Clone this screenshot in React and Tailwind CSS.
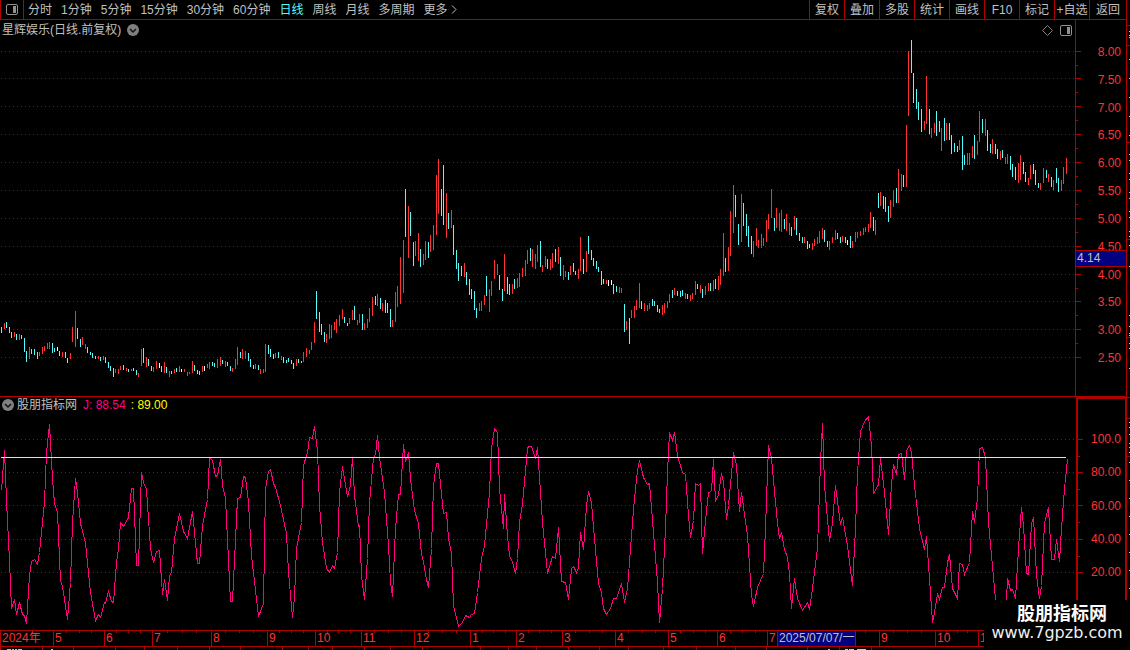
import { useState } from 'react';

const PERIODS = ['分时', '1分钟', '5分钟', '15分钟', '30分钟', '60分钟', '日线', '周线', '月线', '多周期'];
const TOOLS = ['复权', '叠加', '多股', '统计', '画线', 'F10', '标记', '+自选'];

const PRICES = ['8.00', '7.50', '7.00', '6.50', '6.00', '5.50', '5.00', '4.50', '4.00', '3.50', '3.00', '2.50'];
const PRICE_ROWS = [51, 78, 106, 134, 162, 190, 218, 246, 274, 301, 329, 357];
const PRICE_MINOR = [65, 92, 120, 148, 176, 204, 232, 288, 315, 343];

const LEVELS = ['100.0', '80.00', '60.00', '40.00', '20.00'];
const LEVEL_ROWS = [439, 472, 505, 539, 572];
const LEVEL_MINOR = [456, 489, 522, 556];

// label and cell width on the time axis; the cursor date covers one cell, so that one has no label
const MONTHS = [
  ['2024年', 53], ['5', 51], ['6', 48], ['7', 59], ['8', 56], ['9', 48], ['10', 46], ['11', 53], ['12', 56],
  ['1', 46], ['2', 46], ['3', 53], ['4', 53], ['5', 49], ['6', 50], ['7', 54], ['', 58], ['9', 56], ['10', 43], ['11', 50],
];

// r = up, c = down, w = unchanged: x, high, low
const CANDLES = `
c1,327,333 r4,323,329 c6,322,328 c9,327,333 c11,332,338 r14,332,337 c16,334,340 r19,334,340 c21,335,339
c24,338,352 c26,351,362 r29,347,359 c31,349,354 c34,349,355 c37,352,359 r39,352,356 r42,347,354 r44,346,351
r47,343,349 r49,342,349 c52,343,353 c54,348,352 w57,347,351 c59,351,356 r62,352,357 c65,352,358 c67,358,363
r70,353,359 r72,327,342 r75,311,347 c77,328,339 c80,339,347 r82,337,345 r85,344,349 c87,347,353 c90,352,355
c92,353,358 c95,356,359 r98,356,359 c100,357,361 r103,356,360 c105,357,363 c108,362,368 c110,366,371
c113,368,377 r115,369,373 r118,369,374 r120,366,370 c123,365,370 r126,368,371 c128,369,372 r131,369,371
c133,368,371 c136,370,375 r138,373,377 r141,349,366 c143,348,363 r146,357,367 c148,359,366 c151,366,371
r153,367,372 r156,361,369 w159,363,368 c161,366,372 r164,362,373 c166,367,373 r169,371,377 c171,371,374
r174,369,373 c176,368,372 r179,366,372 w181,369,372 r184,369,372 r187,372,376 r189,372,374 r192,361,373
c194,365,371 c197,370,374 c199,371,375 r202,366,372 w204,366,371 r207,364,368 r209,362,369 c212,362,366
c214,363,367 r217,359,368 r220,357,366 c222,360,364 r225,361,367 c227,362,366 c230,366,371 r232,368,372
r235,359,369 r237,347,365 c240,352,358 r242,349,359 r245,351,359 c248,353,361 c250,359,367 c253,365,369
r255,364,369 c258,365,370 r260,369,374 r263,369,373 r265,344,372 c268,345,354 c270,349,357 c273,354,359
r275,353,358 c278,352,358 r281,356,360 c283,357,363 c286,360,363 c288,358,362 c291,360,364 c293,363,369
r296,359,366 c298,359,363 c301,361,363 r303,352,362 r306,348,357 r309,350,354 r311,342,350 r314,322,343
c316,291,319 c319,312,332 c321,324,335 c324,332,342 r326,334,343 r329,324,339 r331,325,338 r334,322,330
r336,319,333 r339,315,326 r342,309,319 c344,317,323 c347,323,326 r349,318,324 r352,310,320 c354,306,320
r357,320,325 r359,314,323 c362,314,330 r364,323,330 r367,319,328 r369,308,322 r372,297,316 c375,296,305
r377,294,306 c380,298,309 r382,303,311 c385,300,313 c387,303,313 c390,309,327 r392,320,327 r395,292,322
r397,286,307 r400,257,304 r403,240,293 c405,189,237 r408,206,258 c410,212,236 c413,242,266 r415,241,256
r418,233,261 c420,249,267 r423,254,265 r425,241,260 c428,242,258 r430,235,252 r433,225,250 r436,175,235
r438,159,214 c441,189,216 c443,165,225 r446,193,238 c448,213,229 r451,210,228 c453,225,255 c456,250,269
c458,263,281 c461,266,276 r464,263,277 c466,272,285 c469,279,295 c471,289,299 c474,291,310 c476,308,318
r479,303,311 r481,301,311 r484,295,305 c486,276,296 r489,289,312 r491,281,296 r494,260,279 r497,264,275
c499,275,290 c502,289,301 r504,254,291 c507,277,294 c509,284,295 r512,284,294 c514,279,289 r517,278,288
r519,273,287 r522,268,277 r525,260,276 r527,250,264 c530,248,261 r532,249,267 r535,254,269 r537,245,262
c540,241,267 r542,265,272 r545,256,267 c547,259,269 r550,259,270 r552,253,268 c555,249,262 r558,247,264
c560,257,276 r563,265,280 r565,271,277 c568,272,280 r570,266,275 c573,263,272 c575,271,275 r578,269,279
r580,237,271 c583,259,274 r586,251,272 c588,236,254 c591,250,260 c593,258,266 c596,261,269 c598,267,272
c601,271,285 c603,279,284 r606,280,284 w608,280,286 w611,280,285 c613,284,294 c616,286,292 r619,287,293
r621,288,293 c624,304,332 r626,321,330 c629,318,344 r631,310,318 r634,306,318 r636,300,310 r639,283,308
c641,301,309 r644,303,311 r647,305,311 r649,303,309 c652,299,306 c654,301,306 c657,305,312 c659,309,313
r662,305,315 r664,303,313 r667,301,308 r669,294,303 c672,290,298 r674,288,295 c677,291,296 c680,291,297
c682,290,296 r685,293,299 c687,294,299 r690,295,301 r692,293,299 r695,281,295 c697,284,289 r700,285,293
c702,289,298 r705,286,295 r708,283,291 c710,283,291 r713,280,291 c715,279,289 r718,276,290 r720,269,285
r723,233,276 c725,258,272 r728,247,271 r730,211,256 r733,185,233 c735,195,217 c738,224,245 r741,194,242
c743,203,226 c746,214,236 c748,226,247 c751,236,254 r753,241,257 r756,228,246 r758,240,248 r761,234,248
r763,238,246 r766,220,242 r768,214,229 r771,189,218 c774,218,231 r776,208,228 r779,213,231 r781,210,232
c784,219,229 r786,214,231 r789,223,235 c791,227,236 r794,216,230 c796,218,235 c799,233,241 c802,237,243
r804,237,243 c807,241,249 c809,244,248 r812,243,250 r814,239,246 r817,237,244 r819,231,243 r822,228,239
c824,230,242 c827,241,247 r829,241,250 r832,237,243 r835,230,240 c837,233,239 c840,237,243 r842,236,242
c845,237,243 w847,240,245 c850,236,248 r852,241,248 r855,232,242 r857,232,238 r860,231,236 r863,228,235
r865,227,232 r868,224,232 r870,212,228 c873,217,231 r875,220,235 c878,193,208 r880,192,206 c883,196,209
c885,197,212 c888,206,222 r890,200,218 r893,190,207 c896,188,203 r898,169,203 r901,174,191 c903,175,187
r906,125,187 r908,51,116 c911,40,73 c913,73,103 c916,89,109 c918,102,120 c921,109,132 r924,121,130
r926,76,124 c929,109,134 r931,128,138 r934,123,133 c936,111,136 c939,121,132 r941,128,151 c944,118,141
r946,123,140 c949,123,140 c951,135,154 c954,143,152 c957,146,152 r959,140,150 c962,136,170 c964,155,165
r967,153,165 r969,153,165 r972,146,158 c974,135,159 r977,141,155 r979,111,142 c982,119,133 r985,119,136
c987,130,151 c990,144,153 r992,139,154 c995,144,154 c997,149,159 r1000,151,160 c1002,150,158 r1005,157,164
r1007,154,164 c1010,156,170 c1012,164,177 c1015,167,180 r1018,163,183 r1020,155,180 c1023,162,174
c1025,172,182 r1028,178,185 r1030,165,179 c1033,164,174 c1035,170,185 c1038,183,188 r1040,183,190
r1043,168,183 c1046,170,178 r1048,174,182 c1051,177,187 r1053,180,190 c1056,168,183 c1058,178,192
r1061,180,191 r1063,167,184 r1066,158,174`
  .trim()
  .split(/\s+/)
  .map((item) => {
    const [x, high, low] = item.slice(1).split(',').map(Number);
    return { kind: item[0], x, high, low };
  });

const CANDLE_FILL = { r: 'fill-[#ff3232]', c: 'fill-[#54fcfc]', w: 'fill-white' };

const J_LINE = `
1,490 4,450 6,500 9,560 11,608 14,599 16,614 19,602 22,614 24,615 26,623 29,575 31,561 34,559 37,564 39,552 44,502
46,452 49,424 52,478 54,503 57,512 60,580 62,586 67,619 70,582 72,522 75,478 77,492 80,523 85,542 90,592 95,620
98,614 100,617 104,602 105,603 108,591 111,601 113,602 116,562 118,548 120,522 123,526 128,517 131,488 133,488
136,565 138,565 141,472 143,482 146,489 150,548 153,562 156,551 159,550 162,594 164,579 167,600 169,575 171,572
174,538 179,513 183,531 187,538 192,511 197,563 199,563 202,525 207,499 209,457 212,460 215,476 217,475 220,459
222,485 225,498 230,601 232,601 237,498 240,497 243,476 245,477 248,502 251,555 258,616 263,603 265,488 268,471
270,469 273,483 275,487 280,505 286,533 288,572 292,617 294,597 296,548 301,522 303,465 307,452 309,437 312,438
314,426 317,450 319,505 322,542 326,568 329,572 332,565 334,568 337,552 339,492 342,466 347,496 350,485 352,457
354,495 358,526 359,525 361,575 364,599 367,558 369,502 373,457 375,454 377,435 379,457 384,492 388,545 390,582
392,596 395,528 398,494 400,494 403,444 405,461 408,452 410,478 414,510 418,523 421,553 423,562 426,579 428,587
431,548 433,485 436,463 438,463 443,513 446,512 448,538 451,553 453,605 458,626 462,622 465,615 469,617 471,614
474,613 477,592 481,558 484,545 489,492 491,448 494,428 497,432 499,488 503,528 504,494 507,535 509,555 512,562
515,573 517,558 519,522 522,503 527,448 528,446 531,446 535,458 537,447 542,522 547,573 552,556 555,558 558,527
561,581 565,582 568,599 571,568 573,566 576,572 578,567 580,532 583,549 586,505 588,491 591,502 594,538 598,583
601,592 603,608 606,614 610,608 613,598 616,598 621,583 624,602 627,588 632,522 634,498 637,470 639,460 643,477
647,484 649,483 653,532 657,582 659,622 662,588 665,528 667,472 669,432 672,440 674,432 677,455 682,472 685,474
688,515 690,537 693,520 695,483 698,485 700,483 702,553 705,520 708,492 711,491 713,459 715,501 718,494 721,473
723,481 726,519 728,505 733,452 736,465 739,511 741,492 747,535 751,595 753,606 757,587 763,573 765,528 768,445
771,458 777,523 779,538 781,532 784,549 787,557 789,573 791,608 794,578 797,598 802,610 807,602 809,609 812,588
817,548 820,462 822,423 824,485 829,541 832,522 835,485 840,524 842,517 847,545 852,585 855,528 857,472 860,431
864,421 868,416 871,445 873,493 878,484 880,458 884,492 888,534 891,483 893,464 896,474 898,454 901,453 904,479
906,450 909,445 911,452 914,485 919,528 924,549 926,536 929,578 932,622 934,612 937,593 939,599 942,587 944,587
947,562 949,554 952,588 957,598 959,563 962,564 964,574 969,562 972,511 974,522 977,498 979,448 982,447 985,457
988,522 995,599 1000,622 1006,600 1007,578 1010,590 1012,589 1015,598 1018,548 1021,507 1023,525 1026,573
1028,574 1031,523 1033,517 1036,575 1039,598 1041,585 1044,522 1048,507 1051,559 1054,559 1056,539 1059,561
1061,528 1064,488 1067,459`.trim();

const STRIP_RED = [25, 45, 142, 239, 337, 397, 418, 456];
const STRIP_GREY = [
  31, 35, 37, 59, 78, 97, 116, 135, 154, 160, 173, 179, 192, 198, 211, 217, 231, 236, 245, 266, 315, 326, 333, 335,
  343, 348, 368, 422, 427, 434, 443, 447, 452, 462, 480, 498, 516, 534, 552, 570, 588,
];
const FOOT_TICKS = [
  0, 42, 73, 115, 144, 177, 209, 240, 282, 308, 332, 364, 390, 422, 480, 508, 536, 568, 599, 628, 663, 696, 735,
  766, 807, 839, 871,
];

function GridRows({ rows }) {
  return rows.map((y) => (
    <path key={y} d={`M1 ${y + 0.5}H1075`} className="stroke-[#a80000]" strokeDasharray="1 3" />
  ));
}

function AxisTicks({ major, minor, top, height }) {
  return (
    <svg
      className="w-[6px] shrink-0"
      height={height}
      viewBox={`0 ${top} 6 ${height}`}
      shapeRendering="crispEdges"
      aria-hidden="true"
    >
      <g className="fill-[#b00000]">
        {major.map((y) => <rect key={y} x="0" y={y} width="5" height="1" />)}
        {minor.map((y) => <rect key={y} x="0" y={y} width="2" height="1" />)}
      </g>
    </svg>
  );
}

function CollapseButton({ label }) {
  return (
    <button type="button" aria-label={label} className="shrink-0">
      <svg width="12" height="12" viewBox="0 0 12 12" fill="none" aria-hidden="true">
        <circle cx="6" cy="6" r="6" fill="#808080" />
        <path d="M3 5l3 3 3-3" stroke="#101010" strokeWidth="1.5" />
      </svg>
    </button>
  );
}

function PanelIcon() {
  return (
    <svg width="12" height="11" viewBox="0 0 12 11" fill="none" aria-hidden="true">
      <rect x="0.5" y="0.5" width="11" height="10" rx="1.5" stroke="#909090" />
      <rect x="7" y="2" width="3" height="7" fill="#909090" />
    </svg>
  );
}

export default function App() {
  const [period, setPeriod] = useState('日线');

  return (
    <div className="relative flex min-h-screen bg-black text-[12px] leading-4 text-[#c0c0c0] font-['Liberation_Sans','Noto_Sans_CJK_SC',sans-serif]">
      <main className="flex min-w-0 flex-1 flex-col">
        {/* Toolbar */}
        <header className="flex h-5 justify-between border-b border-[#b00000] whitespace-nowrap">
          <nav className="flex">
            <button type="button" aria-label="侧栏" className="flex w-6 items-center justify-center border-x border-[#b00000]">
              <PanelIcon />
            </button>
            <div className="ml-1 flex items-center gap-[9px]">
              {PERIODS.map((name) => (
                <button
                  key={name}
                  type="button"
                  onClick={() => setPeriod(name)}
                  className={name === period ? 'text-[#54fcfc]' : 'text-[#c0c0c0]'}
                >
                  {name}
                </button>
              ))}
              <button type="button" className="flex items-center gap-[3px]">
                更多
                <svg width="6" height="9" viewBox="0 0 6 9" fill="none" aria-hidden="true">
                  <path d="M1 0.5l4 4-4 4" stroke="#c0c0c0" />
                </svg>
              </button>
            </div>
          </nav>
          <div className="flex">
            {TOOLS.map((name) => (
              <button key={name} type="button" className="w-[35px] border-l border-[#b00000] text-center">
                {name}
              </button>
            ))}
            <button type="button" className="w-[37px] border-l border-[#b00000] text-center">返回</button>
          </div>
        </header>

        {/* Daily candles */}
        <section className="flex border-b border-[#b00000]">
          <div className="min-w-0 flex-1">
            <div className="flex h-5 items-center justify-between pr-[3px] pl-[2px]">
              <div className="flex items-center gap-[6px]">
                <h1>星辉娱乐(日线.前复权)</h1>
                <CollapseButton label="展开" />
              </div>
              <div className="flex items-center gap-[7px]">
                <svg width="11" height="11" viewBox="0 0 11 11" fill="none" aria-hidden="true">
                  <path d="M5.5 0.5l5 5-5 5-5-5z" stroke="#808080" />
                </svg>
                <PanelIcon />
              </div>
            </div>
            <svg
              className="block h-[356px] w-full"
              viewBox="0 40 1075 356"
              preserveAspectRatio="none"
              shapeRendering="crispEdges"
              role="img"
              aria-label="日线"
            >
              <GridRows rows={PRICE_ROWS} />
              {CANDLES.map(({ kind, x, high, low }) => (
                <rect key={x} x={x} y={high} width="1" height={low - high} className={CANDLE_FILL[kind]} />
              ))}
            </svg>
          </div>
          <div className="relative flex w-[51px] border-l border-[#b00000]">
            <AxisTicks major={PRICE_ROWS} minor={PRICE_MINOR} top={20} height={376} />
            <div className="mt-6 flex h-[322px] flex-1 flex-col justify-between pr-[5px] text-right text-[#ff3232]">
              {PRICES.map((price) => <span key={price}>{price}</span>)}
            </div>
            <div className="absolute inset-x-0 top-[230px] h-[17px] border-y border-[#b00000] bg-[#000080] pl-px leading-[15px]">
              4.14
            </div>
          </div>
        </section>

        {/* Indicator */}
        <section className="flex">
          <div className="min-w-0 flex-1">
            <div className="flex h-4 items-center pl-[2px]">
              <CollapseButton label="指标" />
              <h2 className="ml-[3px]">股朋指标网</h2>
              <span className="ml-[6px] text-[#ff0080]">J: 88.54</span>
              <span className="ml-[5px] text-[#ffff00]">: 89.00</span>
            </div>
            <svg
              className="block h-[217px] w-full"
              viewBox="0 413 1076 217"
              preserveAspectRatio="none"
              shapeRendering="crispEdges"
              role="img"
              aria-label="股朋指标网"
            >
              <GridRows rows={LEVEL_ROWS} />
              <polyline points={J_LINE} transform="translate(0.5 0.5)" fill="none" className="stroke-[#ff0080]" />
              <rect x="1" y="457" width="1065" height="1" className="fill-[#ffff00]" />
            </svg>
          </div>
          <div className="flex w-[50px] border-t-2 border-r border-l-2 border-[#b00000]">
            <AxisTicks major={LEVEL_ROWS} minor={LEVEL_MINOR} top={399} height={231} />
            <div className="mt-8 flex h-[149px] flex-1 flex-col justify-between pr-1 text-right text-[#ff3232]">
              {LEVELS.map((level) => <span key={level}>{level}</span>)}
            </div>
          </div>
        </section>

        {/* Time axis */}
        <div className="relative flex h-[17px] overflow-hidden border-y border-[#b00000] leading-[15px] text-[#ff3232]">
          {MONTHS.map(([label, width], i) => (
            <div key={i} className="relative shrink-0 border-l border-[#b00000] pl-px" style={{ width }}>
              {label}
              {i > 0 && (
                <div className="absolute inset-x-0 top-0 flex justify-evenly">
                  <i className="h-[2px] w-px bg-[#b00000]" />
                  <i className="h-[2px] w-px bg-[#b00000]" />
                  <i className="h-[2px] w-px bg-[#b00000]" />
                </div>
              )}
            </div>
          ))}
          <time className="absolute inset-y-0 left-[777px] w-[79px] overflow-hidden border-x border-[#b00000] bg-[#000080] pl-px whitespace-nowrap text-[#c0c0c0]">
            2025/07/07/一
          </time>
        </div>
        <svg className="block h-[3px] w-full" viewBox="0 647 1126 3" preserveAspectRatio="none" shapeRendering="crispEdges" aria-hidden="true">
          <g className="fill-[#b00000]">
            {FOOT_TICKS.map((x) => <rect key={x} x={x} y="647" width="1" height="3" />)}
          </g>
          <path d="M7 649h4v1h-4zM12 649h2v1h-2zM15 649h2v1h-2zM18 649h4v1h-4zM51 649h2v1h-2zM828 649h2v1h-2z" fill="#c0c0c0" />
          <path d="M845 649h3v1h-3zM849 649h5v1h-5zM857 649h9v1h-9z" fill="#54fcfc" />
        </svg>
      </main>

      {/* Edge of the neighbouring quote panel */}
      <aside className="w-1 border-l border-[#b00000]">
        <svg width="3" height="650" viewBox="0 0 3 650" shapeRendering="crispEdges" aria-hidden="true">
          <g className="fill-[#b00000]">
            {STRIP_RED.map((y) => <rect key={y} x="0" y={y} width="3" height="1" />)}
          </g>
          <g className="fill-[#c0c0c0]">
            {STRIP_GREY.map((y) => <rect key={y} x="2" y={y} width="1" height="1" />)}
          </g>
        </svg>
      </aside>

      {/* Watermark */}
      <div className="absolute right-0 bottom-0 flex h-[50px] w-[146px] flex-col items-center bg-black pt-1 whitespace-nowrap">
        <strong className="ml-[10px] text-[18px] leading-5 text-white">股朋指标网</strong>
        <span className="text-[16px] leading-[18px] text-[#f0f0f0] font-['DejaVu_Sans',sans-serif]">www.7gpzb.com</span>
      </div>
    </div>
  );
}
